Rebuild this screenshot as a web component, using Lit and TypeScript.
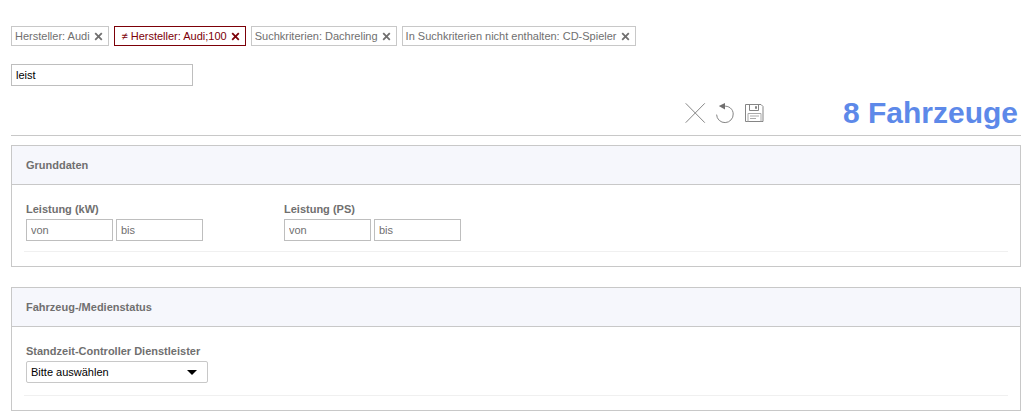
import { LitElement, html, css, svg } from "lit";
import { customElement, property, state } from "lit/decorators.js";
import { classMap } from "lit/directives/class-map.js";

interface Filter {
  text: string;
  negated?: boolean;
}

@customElement("filter-chip")
class FilterChip extends LitElement {
  @property() text = "";
  @property({ type: Boolean }) negated = false;

  static styles = css`
    :host {
      display: block;
    }
    .chip {
      box-sizing: border-box;
      display: flex;
      align-items: center;
      gap: 4px;
      height: 20px;
      padding: 0 5px 0 3px;
      border: 1px solid #c8c8c8;
      color: #706f6f;
      font-size: 11px;
      line-height: 18px;
      white-space: nowrap;
    }
    .negated {
      padding-left: 7px;
      border-color: #7c0008;
      color: #7c0008;
    }
    .remove {
      display: flex;
      padding: 0;
      border: 0;
      background: none;
      color: inherit;
      cursor: pointer;
    }
  `;

  render() {
    return html`
      <span class=${classMap({ chip: true, negated: this.negated })}>
        <span>${this.negated ? "≠ " : ""}${this.text}</span>
        <button class="remove" aria-label="Filter entfernen">
          <svg width="9" height="9" viewBox="0 0 9 9" fill="none" stroke="currentColor" stroke-width="1.8">
            <path d="M1.2 1.2 7.8 7.8M7.8 1.2 1.2 7.8" />
          </svg>
        </button>
      </span>
    `;
  }
}

@customElement("filter-panel")
class FilterPanel extends LitElement {
  @property() heading = "";

  static styles = css`
    :host {
      display: block;
      border: 1px solid #c8c8c8;
    }
    .heading {
      margin: 0;
      padding: 12px 14px;
      border-bottom: 1px solid #c8c8c8;
      background: #f6f7fc;
      font-size: 11px;
      font-weight: bold;
      line-height: 14px;
    }
    .body {
      padding: 17px 12px 14px;
    }
    .row {
      padding: 0 2px 10px;
      border-bottom: 1px solid #f0f0f0;
    }
  `;

  render() {
    return html`
      <h2 class="heading">${this.heading}</h2>
      <div class="body"><div class="row"><slot></slot></div></div>
    `;
  }
}

@customElement("range-field")
class RangeField extends LitElement {
  @property() label = "";

  static styles = css`
    :host {
      display: block;
    }
    .label {
      display: block;
      padding-bottom: 2px;
      font-size: 11px;
      font-weight: bold;
      line-height: 15px;
    }
    .inputs {
      display: flex;
      gap: 3px;
    }
    .input {
      box-sizing: border-box;
      width: 87px;
      height: 22px;
      padding: 0 4px;
      border: 1px solid #bebebe;
      border-radius: 0;
      background: #fff;
      font: 11px "Liberation Sans", Arial, sans-serif;
    }
    .input::placeholder {
      color: #706f6f;
      opacity: 1;
    }
  `;

  render() {
    return html`
      <label class="label" for="from">${this.label}</label>
      <div class="inputs">
        <input class="input" id="from" placeholder="von" />
        <input class="input" placeholder="bis" aria-label="${this.label} bis" />
      </div>
    `;
  }
}

const clearIcon = svg`<path d="M.7 .3 19.8 19.7M19.8 .3.7 19.7" />`;
const resetIcon = svg`
  <path d="M8 3.3c6-1 10.2 2.900 10.200 7.700a8.300 8.300 0 0 1-16.600 .6" />
  <path d="M3.800 3.100 10 0v6.600z" fill="#706f6f" stroke="none" />`;
const saveIcon = svg`
  <path d="M.5 1.500h15.500l2 2v15h-17.500z" />
  <path d="M4.500 1.500v6h9v-6" />
  <path d="M10.500 3.500h1v2h-1z" />
  <path d="M3 18.500v-8h13v8M5 13h9M5 15.500h6" stroke="#aaa" />`;

@customElement("app-root")
class AppRoot extends LitElement {
  @state() private filters: Filter[] = [
    { text: "Hersteller: Audi" },
    { text: "Hersteller: Audi;100", negated: true },
    { text: "Suchkriterien: Dachreling" },
    { text: "In Suchkriterien nicht enthalten: CD-Spieler" },
  ];

  static styles = css`
    :host {
      display: block;
      padding: 26px 5px 6px 11px;
      background: #fff;
      color: #706f6f;
      font-family: "Liberation Sans", Arial, sans-serif;
      font-size: 11px;
    }
    .chips {
      display: flex;
      flex-wrap: wrap;
      gap: 5px;
    }
    .search {
      box-sizing: border-box;
      display: block;
      width: 182px;
      height: 22px;
      margin-top: 18px;
      padding: 0 4px;
      border: 1px solid #bebebe;
      border-radius: 0;
      color: #000;
      font: 11px "Liberation Sans", Arial, sans-serif;
    }
    .summary {
      display: flex;
      justify-content: flex-end;
      align-items: center;
      gap: 77px;
      height: 49px;
      padding-right: 3px;
      border-bottom: 1px solid #c8c8c8;
    }
    .actions {
      display: flex;
      gap: 9px;
      padding-top: 6px;
    }
    .action {
      display: flex;
      padding: 0;
      border: 0;
      background: none;
      cursor: pointer;
    }
    .count {
      margin: 0;
      padding-top: 4px;
      color: #5d89e9;
      font-size: 30px;
      line-height: 34px;
    }
    .panels {
      display: flex;
      flex-direction: column;
      gap: 20px;
      margin-top: 9px;
    }
    .fields {
      display: flex;
      flex-wrap: wrap;
      gap: 10px 81px;
    }
    .label {
      display: block;
      padding-bottom: 2px;
      font-weight: bold;
      line-height: 15px;
    }
    .picker {
      display: inline-grid;
      align-items: center;
      width: 182px;
    }
    .select,
    .arrow {
      grid-area: 1 / 1;
    }
    .select {
      appearance: none;
      box-sizing: border-box;
      width: 100%;
      height: 22px;
      padding: 0 24px 0 4px;
      border: 1px solid #c8c8c8;
      border-radius: 2px;
      background: #fff;
      color: #000;
      font: 11px "Liberation Sans", Arial, sans-serif;
    }
    .arrow {
      justify-self: end;
      margin-right: 11px;
      pointer-events: none;
    }
    .status {
      display: flex;
      flex-direction: column;
      align-items: flex-start;
      padding-bottom: 2px;
    }
  `;

  private action(label: string, icon: unknown) {
    return html`
      <button class="action" aria-label=${label} title=${label}>
        <svg width="21" height="21" viewBox="0 0 21 21" fill="none" stroke="#858585">${icon}</svg>
      </button>
    `;
  }

  render() {
    return html`
      <div class="chips">
        ${this.filters.map(
          (f) => html`<filter-chip .text=${f.text} .negated=${!!f.negated}></filter-chip>`
        )}
      </div>
      <input class="search" aria-label="Suchkriterium" value="leist" />
      <div class="summary">
        <div class="actions">
          ${this.action("Löschen", clearIcon)}
          ${this.action("Zurücksetzen", resetIcon)}
          ${this.action("Speichern", saveIcon)}
        </div>
        <h1 class="count">8 Fahrzeuge</h1>
      </div>
      <div class="panels">
        <filter-panel heading="Grunddaten">
          <div class="fields">
            <range-field label="Leistung (kW)"></range-field>
            <range-field label="Leistung (PS)"></range-field>
          </div>
        </filter-panel>
        <filter-panel heading="Fahrzeug-/Medienstatus">
          <div class="status">
            <label class="label" for="provider">Standzeit-Controller Dienstleister</label>
            <div class="picker">
              <select class="select" id="provider">
                <option>Bitte auswählen</option>
              </select>
              <svg class="arrow" width="10" height="5" viewBox="0 0 10 5"><path d="M0 0h10L5 5z" /></svg>
            </div>
          </div>
        </filter-panel>
      </div>
    `;
  }
}
